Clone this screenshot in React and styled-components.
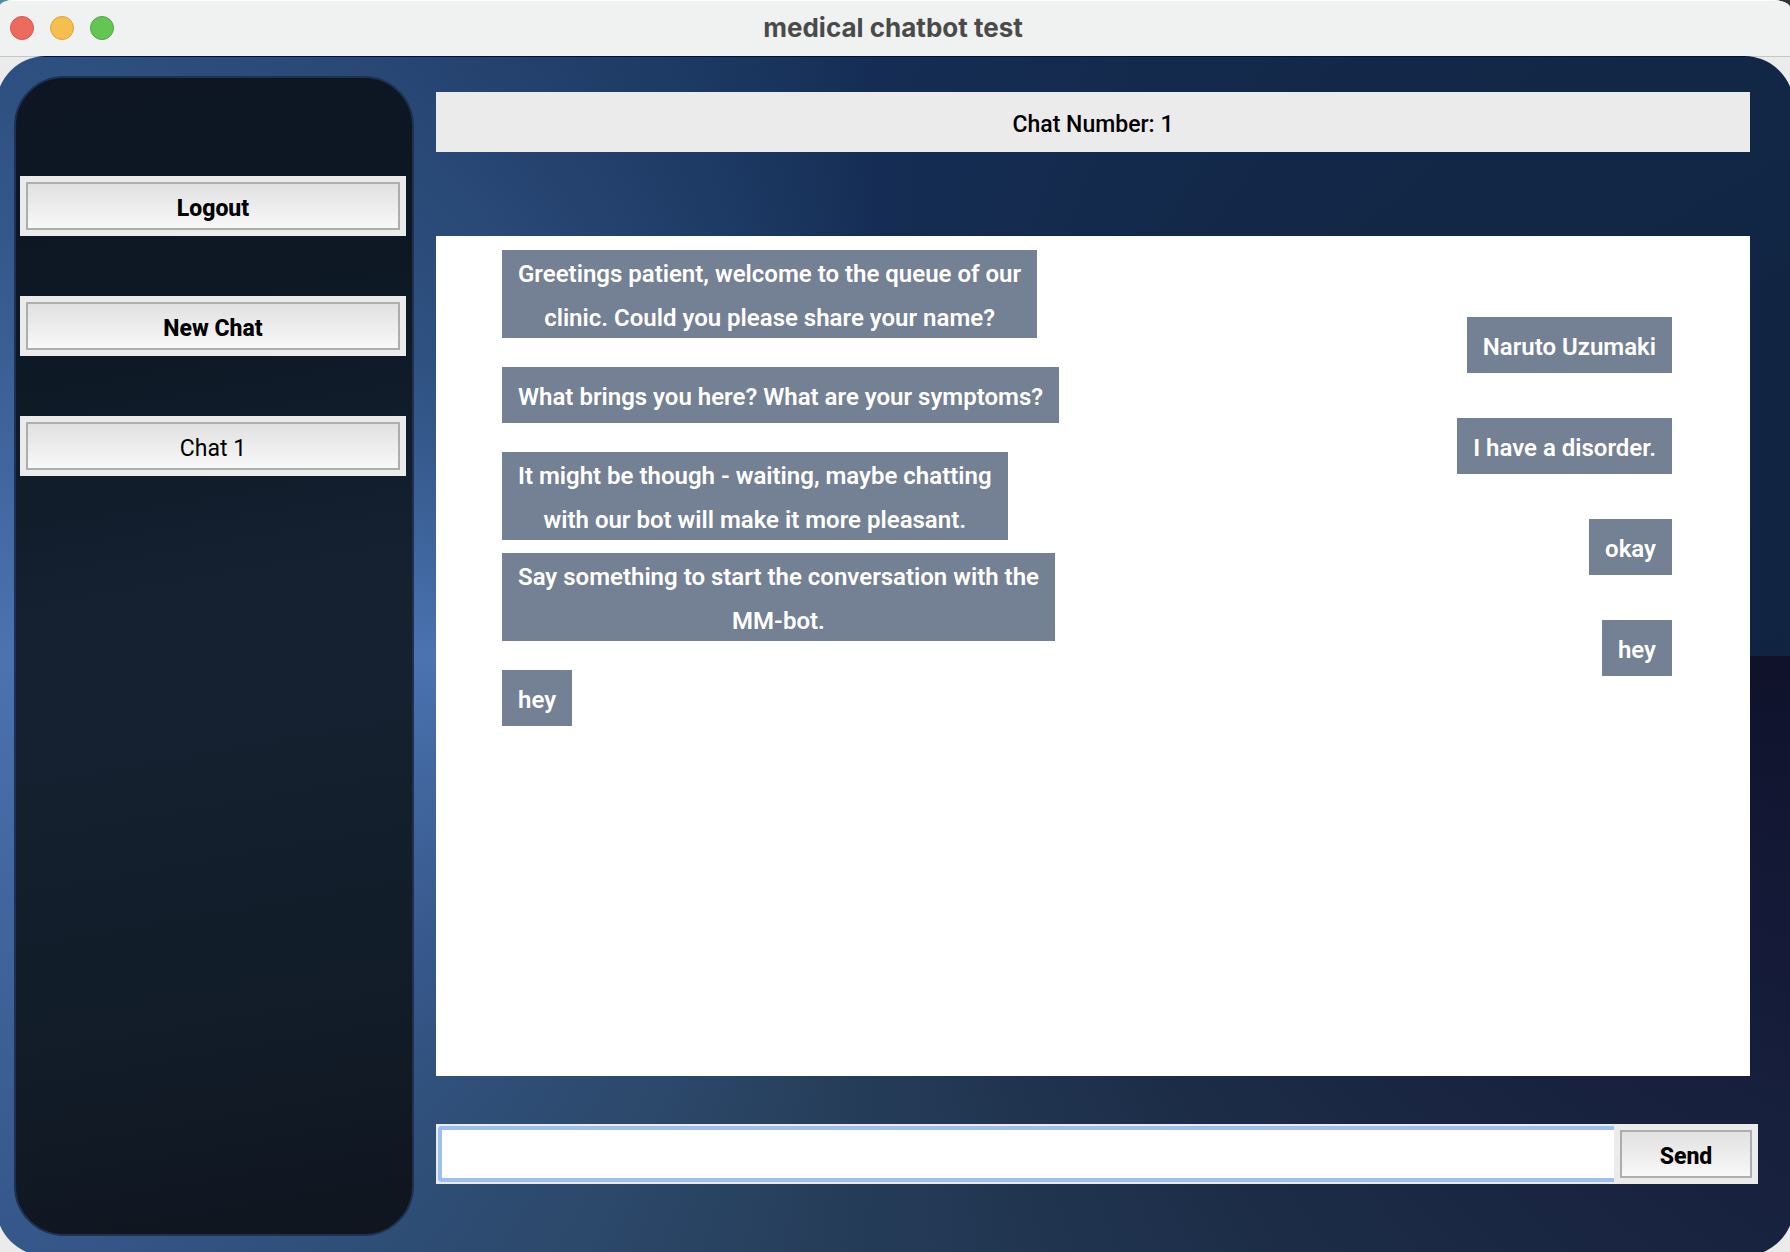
import React from "react";
import styled, { createGlobalStyle, css } from "styled-components";

const face = '"Roboto", "Liberation Sans", sans-serif';

const GlobalStyle = createGlobalStyle`
  *, *::before, *::after { box-sizing: border-box; }
  body { margin: 0; background: linear-gradient(90deg, #4f8ca6 50%, #333 50%); font-family: ${face}; }
  button, input { font-family: inherit; }
`;

const Window = styled.div`
  display: flex;
  flex-direction: column;
  min-height: 100vh;
  overflow: hidden;
  background: #ebebeb;
  border-radius: 14px 18px 0 0 / 6px 8px 0 0;
`;

const TitleBar = styled.header`
  display: grid;
  grid-template-columns: 1fr auto 1fr;
  align-items: center;
  height: 56px;
  padding: 0 14px 2px 10px;
  background: #f0f2f1;
  border-top: 1px solid #fbfcfb;
`;

const Lights = styled.div`
  display: flex;
  gap: 16px;
`;

const Light = styled.button`
  width: 24px;
  height: 24px;
  padding: 0;
  border: 1px solid ${(p) => p.$edge};
  border-radius: 50%;
  background: ${(p) => p.$fill};
`;

const Title = styled.h1`
  margin: 0;
  color: #4a4a4a;
  font: 700 26px/32px "Inter", "Liberation Sans", sans-serif;
`;

const Body = styled.div`
  flex: 1;
  display: flex;
  background: linear-gradient(#c6c6c6 1px, transparent 1px);
`;

const Panel = styled.div`
  flex: 1;
  display: flex;
  align-items: stretch;
  gap: 22px;
  margin: 0 -4px -4px;
  padding: 20px 36px 20px 18px;
  border-radius: 50px;
  background:
    linear-gradient(#04103c 1px, transparent 1px),
    conic-gradient(
      from 90deg,
      #10122b 0deg,
      #141a38 18deg,
      #18233f 34deg,
      #1e304b 65deg,
      #263e5a 98deg,
      #2d4a6e 123deg,
      #2f4f79 134deg,
      #37588c 148deg,
      #4a73b0 180deg,
      #2f5182 212deg,
      #2b4c7a 222deg,
      #264370 234deg,
      #1c3963 251deg,
      #152d54 268deg,
      #132848 310deg,
      #102340 360deg
    );
`;

const Sidebar = styled.nav`
  flex: 0 0 400px;
  display: flex;
  flex-direction: column;
  gap: 60px;
  padding: 98px 6px 6px 4px;
  border: 2px solid #1e3150;
  border-radius: 50px;
  background: linear-gradient(170deg, #0d1622 0%, #0e1926 25%, #152131 45%, #152130 55%, #111c28 80%, #10151f 100%);
`;

const Frame = styled.div`
  display: flex;
  height: 60px;
  padding: 6px;
  background: #ebebeb;
  ${(p) => p.$width && css`flex: 0 0 ${p.$width}px;`}
`;

const Button = styled.button`
  flex: 1;
  padding: 4px 0 0;
  border: 2px solid #adadad;
  background: linear-gradient(#e1e1e1, #f8f8f8);
  color: #000;
  font-size: 23px;
  font-weight: ${(p) => (p.$strong ? 800 : 400)};
`;

const Chat = styled.main`
  flex: 1;
  min-width: 0;
  display: flex;
  flex-direction: column;
  padding: 16px 0 52px;
`;

const ChatTitle = styled.h2`
  margin: 0 8px 84px 0;
  padding: 6px 0 0;
  background: #ebebeb;
  color: #000;
  font-size: 23px;
  font-weight: 500;
  line-height: 54px;
  text-align: center;
`;

const Messages = styled.section`
  flex: 1;
  display: flex;
  justify-content: space-between;
  margin: 0 8px 48px 0;
  padding: 8px 78px 0 66px;
  background: #fff;
`;

const Thread = styled.ul`
  display: grid;
  grid-auto-rows: 100px;
  align-content: start;
  align-items: center;
  justify-items: ${(p) => (p.$mine ? "end" : "start")};
  gap: 1px;
  margin: 0;
  padding: ${(p) => (p.$mine ? 51 : 0)}px 0 0;
  list-style: none;
`;

const Bubble = styled.li`
  height: ${(p) => (p.$tall ? 88 : 56)}px;
  padding: ${(p) => (p.$tall ? 2 : 8)}px 16px 0;
  background: #748093;
  color: #fff;
  font-size: 24px;
  font-weight: 600;
  line-height: 44px;
  text-align: center;
  white-space: pre-line;
`;

const Composer = styled.form`
  display: flex;
  height: 60px;
`;

const Field = styled.div`
  flex: 1;
  display: flex;
  padding: 2px 0 2px 2px;
  background: #ebebeb;
`;

const Input = styled.input`
  flex: 1;
  min-width: 0;
  padding: 0 12px;
  border: 4px solid #9dbeee;
  border-right: 0;
  border-radius: 4px 0 0 4px;
  outline: 0;
  background: #fff;
  font-size: 23px;
`;

const received = [
  "Greetings patient, welcome to the queue of our\nclinic. Could you please share your name?",
  "What brings you here? What are your symptoms?",
  "It might be though - waiting, maybe chatting\nwith our bot will make it more pleasant.",
  "Say something to start the conversation with the\nMM-bot.",
  "hey",
];
const sent = ["Naruto Uzumaki", "I have a disorder.", "okay", "hey"];

const renderMessages = (list) =>
  list.map((text) => (
    <Bubble key={text} $tall={text.includes("\n")}>{text}</Bubble>
  ));

export default function App() {
  return (
    <Window>
      <GlobalStyle />
      <TitleBar>
        <Lights>
          <Light aria-label="Close" $fill="#ed6a5e" $edge="#d5554a" />
          <Light aria-label="Minimize" $fill="#f5bf4f" $edge="#d9a13c" />
          <Light aria-label="Zoom" $fill="#62c554" $edge="#4ea73f" />
        </Lights>
        <Title>medical chatbot test</Title>
      </TitleBar>
      <Body>
        <Panel>
          <Sidebar>
            <Frame><Button $strong>Logout</Button></Frame>
            <Frame><Button $strong>New Chat</Button></Frame>
            <Frame><Button>Chat 1</Button></Frame>
          </Sidebar>
          <Chat>
            <ChatTitle>Chat Number: 1</ChatTitle>
            <Messages>
              <Thread>{renderMessages(received)}</Thread>
              <Thread $mine>{renderMessages(sent)}</Thread>
            </Messages>
            <Composer onSubmit={(e) => e.preventDefault()}>
              <Field>
                <Input type="text" aria-label="Message" />
              </Field>
              <Frame $width={144}><Button type="submit" $strong>Send</Button></Frame>
            </Composer>
          </Chat>
        </Panel>
      </Body>
    </Window>
  );
}
